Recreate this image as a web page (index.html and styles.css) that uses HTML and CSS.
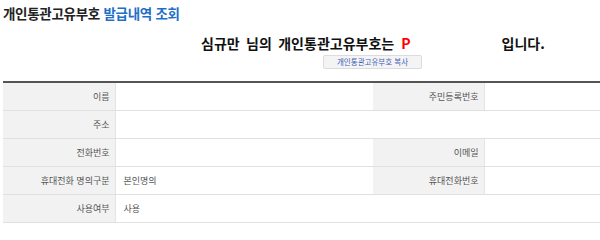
FILE: index.html
```html
<!DOCTYPE html>
<html lang="ko">
<head>
<meta charset="utf-8">
<link rel="stylesheet" href="styles.css">
</head>
<body>
<div class="page">
  <h1 class="title">개인통관고유부호 <span class="accent">발급내역 조회</span></h1>
  <div class="notice">
    <p class="sentence">심규만 님의 개인통관고유부호는<span class="code">P</span><span class="blank"></span>입니다.</p>
    <button class="copy-btn" type="button">개인통관고유부호 복사</button>
  </div>
  <table class="info">
    <colgroup>
      <col class="c-label"><col class="c-value"><col class="c-label2"><col class="c-value2">
    </colgroup>
    <tr><th>이름</th><td></td><th>주민등록번호</th><td></td></tr>
    <tr><th>주소</th><td colspan="3"></td></tr>
    <tr><th>전화번호</th><td></td><th>이메일</th><td></td></tr>
    <tr><th>휴대전화 명의구분</th><td>본인명의</td><th>휴대전화번호</th><td></td></tr>
    <tr><th>사용여부</th><td colspan="3">사용</td></tr>
  </table>
</div>
</body>
</html>
```
FILE: styles.css
```css
html, body {
  margin: 0;
  padding: 0;
  background: #fff;
  overflow: hidden;
}
body {
  font-family: "Noto Sans CJK KR", "Noto Sans", sans-serif;
  color: #222;
}
.page {
  padding: 4px 0 0 3px;
  width: 600px;
}
.title {
  margin: 0;
  font-size: 13.5px;
  font-weight: bold;
  line-height: 18px;
  color: #222;
  letter-spacing: -0.3px;
}
.accent {
  color: #1f6fc6;
}
.notice {
  display: flex;
  flex-direction: column;
  align-items: flex-start;
  margin-top: 12px;
}
.sentence {
  margin: 0 0 0 198px;
  font-size: 14px;
  font-weight: bold;
  line-height: 18px;
  word-spacing: 2.5px;
  color: #111;
  display: flex;
  align-items: center;
  white-space: pre;
}
.code {
  color: #f00;
  margin-left: 7px;
}
.blank {
  display: inline-block;
  width: 91px;
}
.copy-btn {
  margin: 3px 0 0 320px;
  height: 14px;
  width: 99px;
  padding: 0;
  font-family: "Noto Sans CJK KR", sans-serif;
  font-size: 7.5px;
  line-height: 12px;
  color: #3f62b8;
  background: #f4f4f4;
  border: 1px solid #dcdcdc;
  border-radius: 2px;
}
.info {
  margin-top: 12px;
  width: 600px;
  border-collapse: collapse;
  border-top: 2px solid #555;
  table-layout: fixed;
  font-size: 9px;
  color: #555;
}
.c-label { width: 112px; }
.c-value { width: 258px; }
.c-label2 { width: 111px; }
.c-value2 { width: 119px; }
.info th, .info td {
  height: 27px;
  padding: 0;
  border-bottom: 1px solid #e0e0e0;
  font-weight: normal;
  vertical-align: middle;
}
.info th {
  background: #f2f2f2;
  text-align: right;
  padding-right: 5px;
  border-right: 1px solid #e4e4e4;
}
.info td {
  text-align: left;
  padding-left: 8px;
}
```
